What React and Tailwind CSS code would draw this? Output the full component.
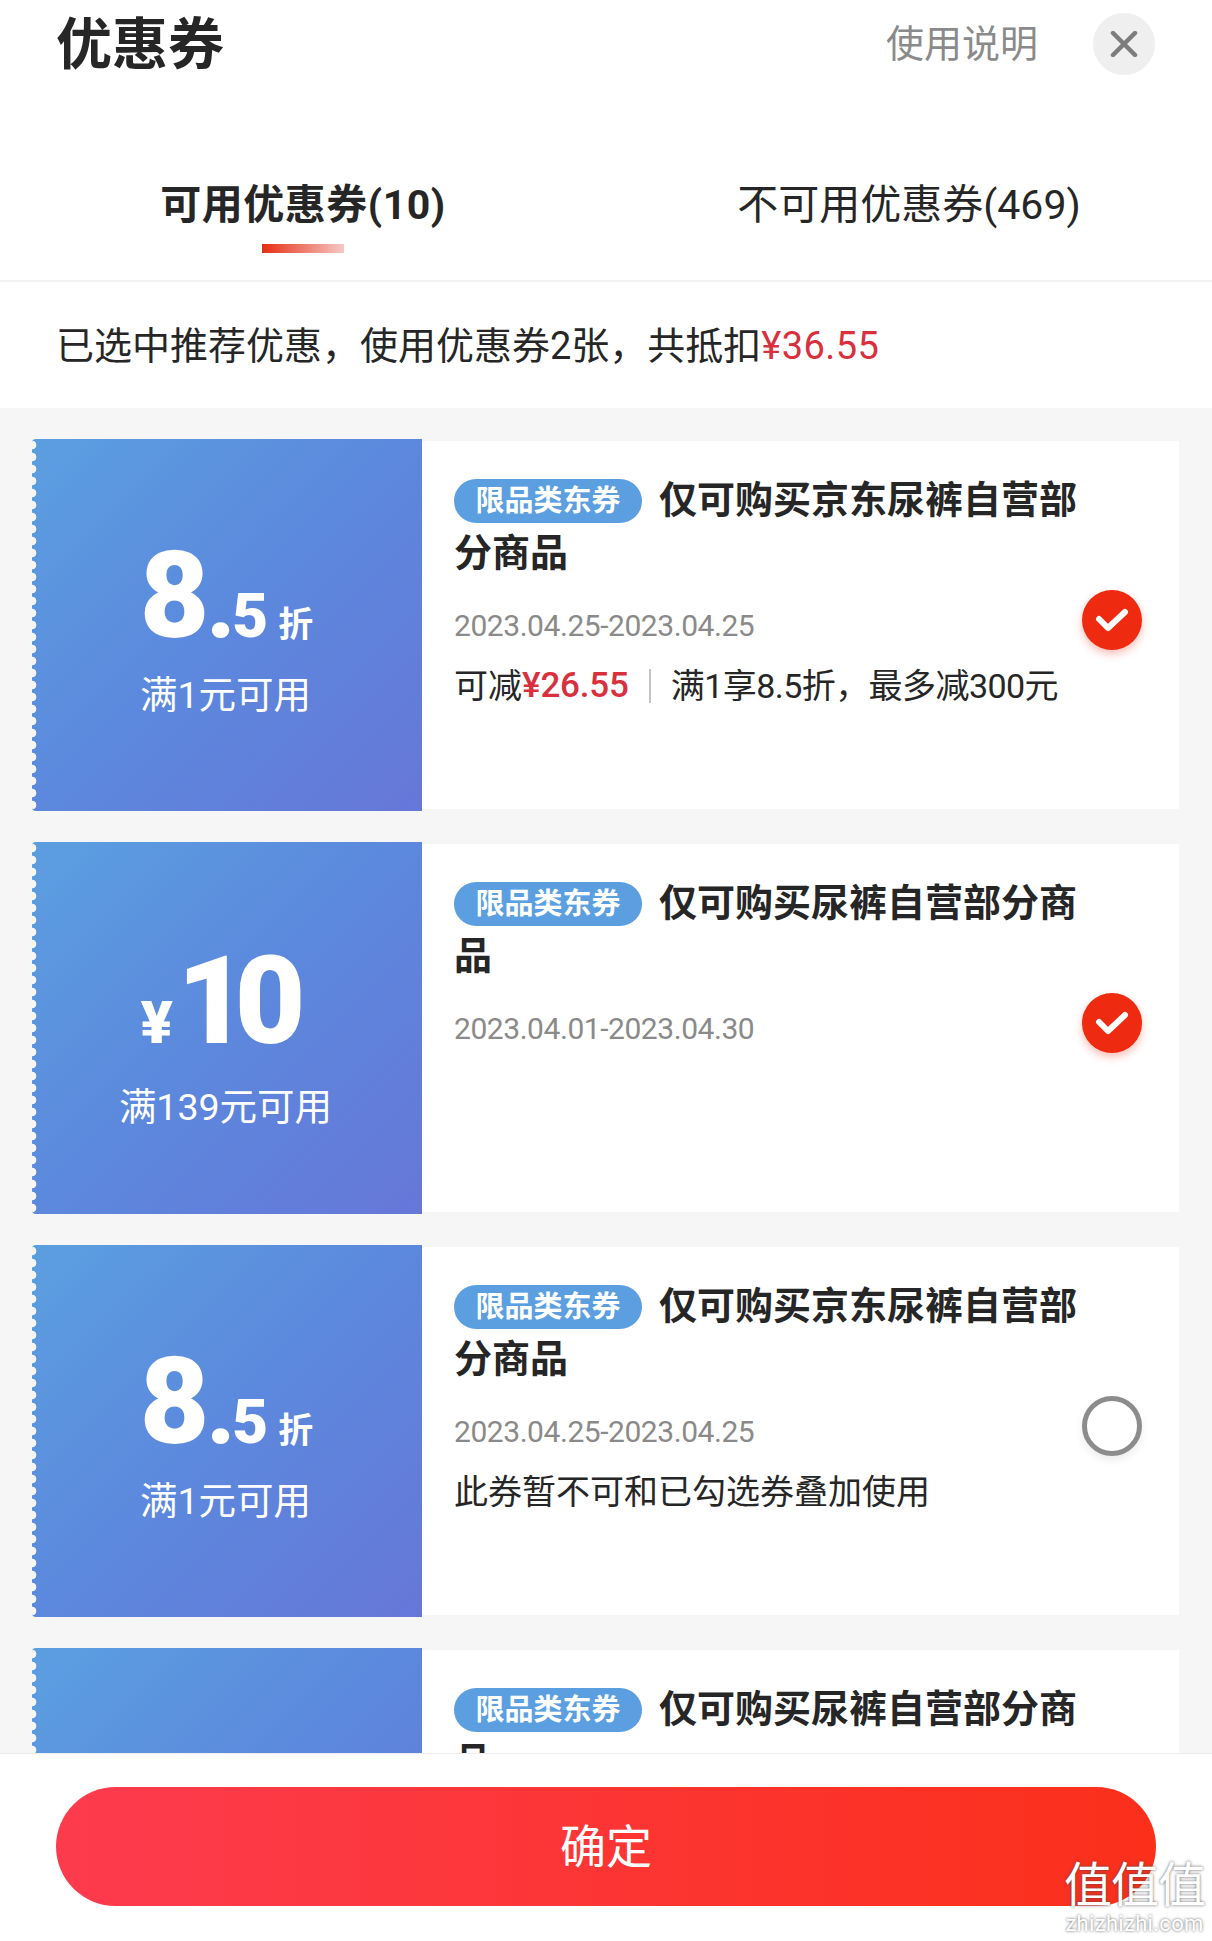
import React from "react";

const coupons = [
  { kind: "discount", need: "满1元可用", title: "仅可购买京东尿裤自营部分商品", date: "2023.04.25-2023.04.25", save: "26.55", info: "满1享8.5折，最多减300元", state: "on" },
  { kind: "cash", need: "满139元可用", title: "仅可购买尿裤自营部分商品", date: "2023.04.01-2023.04.30", state: "on" },
  { kind: "discount", need: "满1元可用", title: "仅可购买京东尿裤自营部分商品", date: "2023.04.25-2023.04.25", note: "此券暂不可和已勾选券叠加使用", state: "off" },
  { kind: "cash", need: "满139元可用", title: "仅可购买尿裤自营部分商品", date: "2023.04.01-2023.04.30", state: "on" },
];

function Check({ state }) {
  if (state === "on") {
    return (
      <div className="w-[60px] h-[60px] shrink-0 rounded-full bg-[#ee2a10] shadow-[0_4px_8px_rgba(238,42,16,0.3)] flex items-center justify-center mb-[10px]">
        <svg width="34" height="26" viewBox="0 0 34 26" fill="none">
          <path d="M4 12 L13 21 L30 5" stroke="#fff" strokeWidth="6" strokeLinecap="round" strokeLinejoin="round" />
        </svg>
      </div>
    );
  }
  return <div className="w-[60px] h-[60px] shrink-0 rounded-full bg-white border-[5px] border-[#8c8c8c] shadow-[0_4px_8px_rgba(0,0,0,0.08)] mb-[10px]" />;
}

function Value({ kind, need }) {
  return (
    <div className="relative w-[390px] h-[372px] shrink-0 rounded-l-[4px] overflow-hidden bg-[linear-gradient(135deg,#5b9fe0,#5c88dd_50%,#6677d8)] text-white flex flex-col items-center pr-[3px]">
      <div className="absolute left-0 top-0 bottom-0 w-[6px] bg-[radial-gradient(circle_at_0_50%,#f6f6f6_4px,transparent_4.7px)] bg-[length:6px_12px]" />
      {kind === "discount" ? (
        <div className="flex items-baseline h-[110px] mt-[102px] font-black leading-[110px] ml-[2px]">
          <span className="text-[120px] tracking-[-3px]">8</span>
          <span className="text-[95px] leading-none tracking-[-3px]">.</span>
          <span className="text-[62px]">5</span>
          <span className="text-[35px] font-bold ml-[10px]">折</span>
        </div>
      ) : (
        <div className="flex items-baseline h-[110px] mt-[105px] font-black leading-[110px] -ml-[18px]">
          <span className="text-[60px] mr-[4px]">¥</span>
          <span className="text-[122px] tracking-[-13px]">10</span>
        </div>
      )}
      <div className={`text-[37.5px] leading-[44px] ${kind === "discount" ? "mt-[22px]" : "mt-[28px]"}`}>{need}</div>
    </div>
  );
}

function Coupon({ c }) {
  return (
    <div className="flex h-[372px] shrink-0">
      <Value kind={c.kind} need={c.need} />
      <div className="flex-1 my-[2px] bg-white flex items-center pl-[32px]">
        <div className="w-[628px] h-full shrink-0 pt-[33px]">
          <div className="text-[38px] leading-[53px] font-bold text-[#262626]">
            <span className="inline-flex items-center justify-center align-top mt-[5px] w-[188px] h-[44px] rounded-full bg-[#5b9fe0] text-white text-[29px] leading-none mr-[17px]">限品类东券</span>
            {c.title}
          </div>
          <div className="mt-[26px] text-[30px] leading-[40px] text-[#8a8a8a] tracking-[-0.45px]">{c.date}</div>
          {c.save && (
            <div className="mt-[20px] flex items-center text-[34px] leading-[40px] text-[#262626]">
              <span>可减</span>
              <span className="text-[#d9303e] text-[35px] font-medium tracking-[-0.2px]">¥{c.save}</span>
              <span className="w-[2px] h-[34px] bg-[#c4c4c4] mx-[20px]" />
              <span className="tracking-[-0.55px]">{c.info}</span>
            </div>
          )}
          {c.note && <div className="mt-[20px] text-[34px] leading-[40px] text-[#262626]">{c.note}</div>}
        </div>
        <Check state={c.state} />
      </div>
    </div>
  );
}

export default function App() {
  return (
    <div className="relative w-[1212px] h-[1941px] overflow-hidden bg-white flex flex-col font-['Roboto','Noto_Sans_CJK_SC',sans-serif]">
      <div className="h-[87px] shrink-0 flex items-center pl-[56px] pr-[57px]">
        <div className="text-[56px] leading-none font-bold text-[#262626] flex-1 pt-[3px]">优惠券</div>
        <div className="text-[38px] leading-none text-[#8a8a8a] mr-[55px]">使用说明</div>
        <div className="w-[62px] h-[62px] rounded-full bg-[#efefef] flex items-center justify-center">
          <svg width="28" height="26" viewBox="0 0 28 26" fill="none">
            <path d="M3 2 L25 24 M25 2 L3 24" stroke="#7c7c7c" strokeWidth="4.5" strokeLinecap="round" />
          </svg>
        </div>
      </div>

      <div className="h-[195px] shrink-0 grid grid-cols-2 border-b-2 border-[#f3f3f3]">
        <div className="flex flex-col items-center pt-[91px]">
          <div className="text-[41px] leading-[54px] font-bold text-[#262626] tracking-[0.5px]">可用优惠券(10)</div>
          <div className="mt-[12px] w-[82px] h-[9px] bg-[linear-gradient(90deg,#e62e14,#f6c8c4)]" />
        </div>
        <div className="flex flex-col items-center pt-[91px]">
          <div className="text-[41px] leading-[54px] text-[#262626]">不可用优惠券(469)</div>
        </div>
      </div>

      <div className="h-[126px] shrink-0 flex items-center pl-[56px] pr-[57px] pt-[2px] text-[38px] leading-none text-[#262626]">
        已选中推荐优惠，使用优惠券2张，共抵扣<span className="text-[#d9303e] tracking-[0.4px]">¥36.55</span>
      </div>

      <div className="flex-1 min-h-0 overflow-hidden bg-[#f6f6f6] pt-[31px] pl-[32px] pr-[33px] flex flex-col gap-[31px]">
        {coupons.map((c, i) => (
          <Coupon key={i} c={c} />
        ))}
      </div>

      <div className="h-[188px] shrink-0 bg-white border-t border-[#eeeeee] px-[56px] pt-[33px]">
        <div className="h-[119px] rounded-full bg-[linear-gradient(90deg,#fd3b4e,#fb2f1a)] flex items-center justify-center text-white text-[46px] leading-none">确定</div>
      </div>

      <div className="absolute right-[7px] bottom-[6px] flex flex-col items-center text-white [text-shadow:0_0_3px_rgba(70,70,70,0.9)]">
        <div className="text-[48px] leading-[46px] tracking-[-1px]">值值值</div>
        <div className="text-[22px] leading-[22px] tracking-[0.3px] mt-[4px]">zhizhizhi.com</div>
      </div>
    </div>
  );
}
